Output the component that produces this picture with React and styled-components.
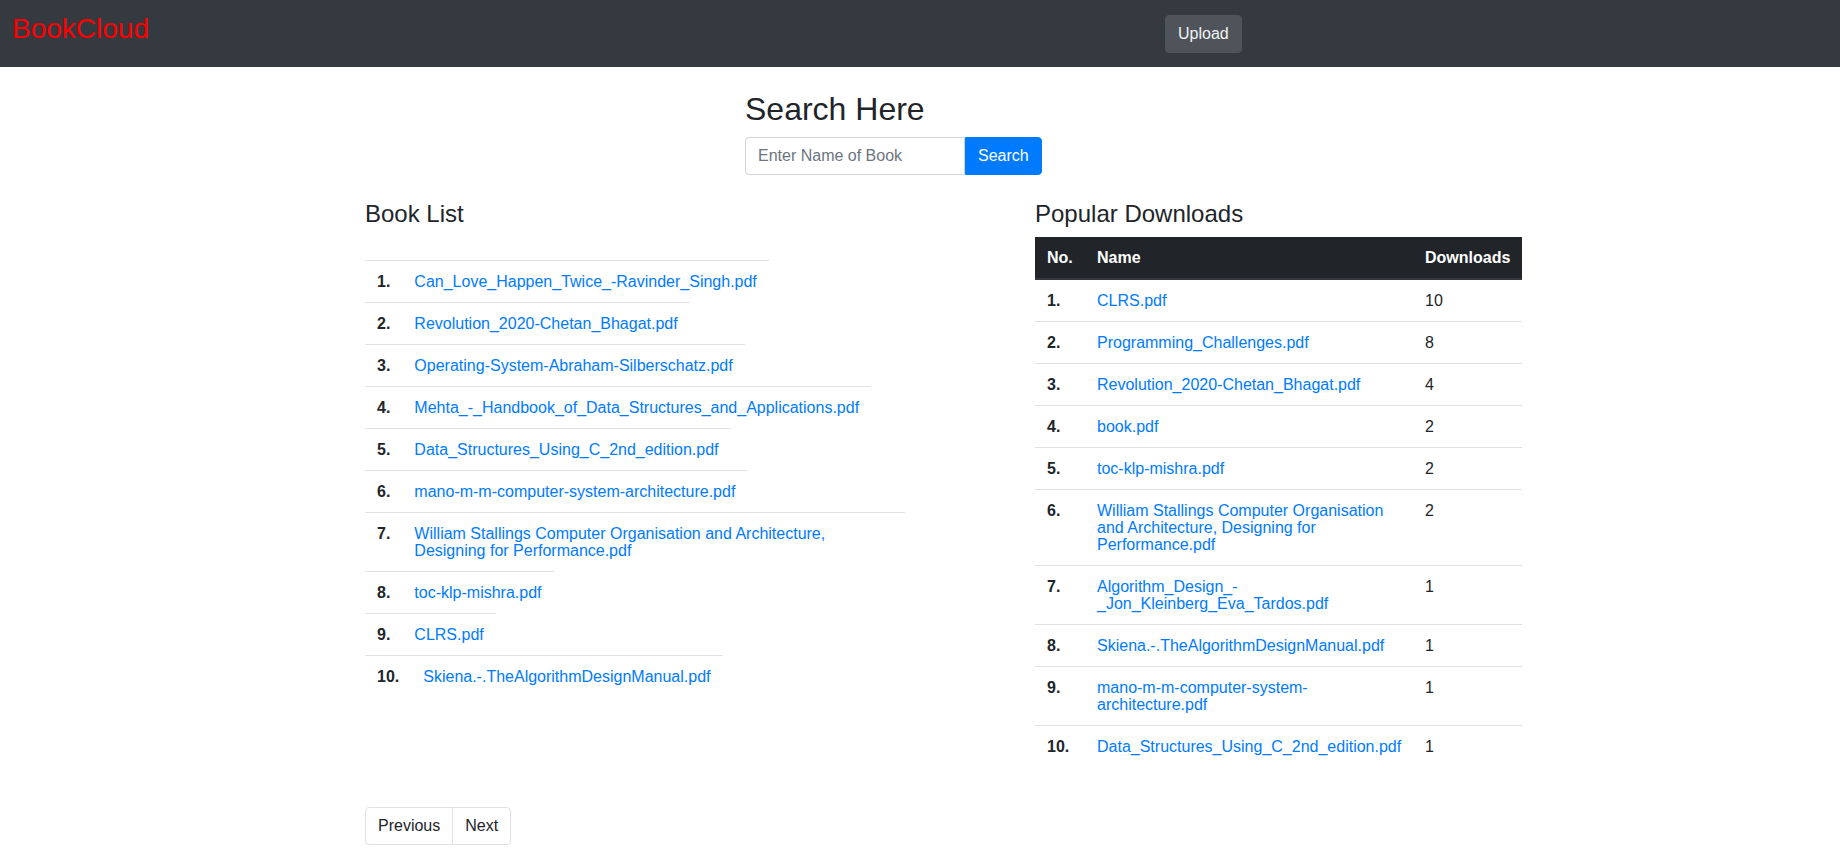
import React from "react";
import styled, { createGlobalStyle } from "styled-components";

const GlobalStyle = createGlobalStyle`
  body {
    margin: 0;
    background: #fff;
    color: #212529;
    font-family: "Liberation Sans", Arial, sans-serif;
    font-size: 16px;
    line-height: 1.5;
  }
  * { box-sizing: border-box; }
`;

// Barra superior
const Navbar = styled.nav`
  display: grid;
  grid-template-columns: 1165px auto;
  align-items: center;
  height: 67px;
  background-color: #343a40;
`;

const Brand = styled.a`
  align-self: start;
  margin-top: 8px;
  padding-left: 12px;
  font-size: 28px;
  line-height: 1.5;
  color: #ff0000;
  text-decoration: none;
`;

const UploadButton = styled.button`
  justify-self: start;
  height: 38px;
  padding: 6px 12px;
  font-family: inherit;
  font-size: 16px;
  line-height: 1.5;
  color: #f1f3f5;
  background-color: #4f545a;
  border: 1px solid #4f545a;
  border-radius: 4px;
  cursor: pointer;
`;

// Bloque de busqueda
const SearchBox = styled.section`
  width: 350px;
  margin: 23px auto 0;
`;

const SearchTitle = styled.h2`
  margin: 0 0 9px;
  font-size: 32px;
  font-weight: 500;
  line-height: 1.2;
`;

const InputGroup = styled.div`
  display: flex;
`;

const SearchInput = styled.input`
  width: 220px;
  height: 38px;
  padding: 6px 12px;
  font-family: inherit;
  font-size: 16px;
  color: #495057;
  border: 1px solid #ced4da;
  border-radius: 4px 0 0 4px;

  &::placeholder {
    color: #6c757d;
  }
`;

const SearchButton = styled.button`
  height: 38px;
  padding: 6px 12px;
  font-family: inherit;
  font-size: 16px;
  color: #fff;
  background-color: #007bff;
  border: 1px solid #007bff;
  border-radius: 0 4px 4px 0;
  cursor: pointer;
`;

// Columnas
const Columns = styled.div`
  display: grid;
  grid-template-columns: 540px 487px;
  column-gap: 130px;
  align-items: start;
  margin: 25px 0 0 calc((100% - 1110px) / 2);
`;

const SectionTitle = styled.h4`
  margin: 0 0 8px;
  font-size: 24px;
  font-weight: 500;
  line-height: 1.2;
`;

const BookList = styled.div`
  margin-top: 31px;
  line-height: 17px;
`;

const BookRow = styled.div`
  display: flex;
  width: fit-content;
  max-width: 540px;
  border-top: 1px solid #dee2e6;
`;

const BookNum = styled.span`
  flex-shrink: 0;
  padding: 12px;
  font-weight: 700;
`;

const BookName = styled.span`
  padding: 12px;
`;

const Link = styled.a`
  color: #007bff;
  text-decoration: none;
`;

const Table = styled.table`
  width: 487px;
  table-layout: fixed;
  border-collapse: collapse;
  line-height: 17px;
`;

const Th = styled.th`
  width: ${(p) => p.$w || "auto"};
  padding: 12px;
  text-align: left;
  vertical-align: bottom;
  color: #fff;
  background-color: #212529;
  border-bottom: 2px solid #32383e;
`;

const Td = styled.td`
  padding: 12px;
  vertical-align: top;
  border-top: 1px solid #dee2e6;
  font-weight: ${(p) => (p.$bold ? 700 : 400)};
`;

// Paginacion
const Pagination = styled.ul`
  display: flex;
  margin: 40px 0 0 calc((100% - 1110px) / 2);
  padding: 0;
  list-style: none;
`;

const PageLink = styled.a`
  display: block;
  padding: 8px 12px;
  margin-left: ${(p) => (p.$first ? "0" : "-1px")};
  line-height: 1.25;
  color: #212529;
  background: #fff;
  border: 1px solid #dee2e6;
  border-radius: ${(p) => (p.$first ? "4px 0 0 4px" : "0 4px 4px 0")};
  text-decoration: none;
`;

const books = [
  "Can_Love_Happen_Twice_-Ravinder_Singh.pdf",
  "Revolution_2020-Chetan_Bhagat.pdf",
  "Operating-System-Abraham-Silberschatz.pdf",
  "Mehta_-_Handbook_of_Data_Structures_and_Applications.pdf",
  "Data_Structures_Using_C_2nd_edition.pdf",
  "mano-m-m-computer-system-architecture.pdf",
  "William Stallings Computer Organisation and Architecture, Designing for Performance.pdf",
  "toc-klp-mishra.pdf",
  "CLRS.pdf",
  "Skiena.-.TheAlgorithmDesignManual.pdf",
];

const popular = [
  ["CLRS.pdf", 10],
  ["Programming_Challenges.pdf", 8],
  ["Revolution_2020-Chetan_Bhagat.pdf", 4],
  ["book.pdf", 2],
  ["toc-klp-mishra.pdf", 2],
  ["William Stallings Computer Organisation and Architecture, Designing for Performance.pdf", 2],
  ["Algorithm_Design_-_Jon_Kleinberg_Eva_Tardos.pdf", 1],
  ["Skiena.-.TheAlgorithmDesignManual.pdf", 1],
  ["mano-m-m-computer-system-architecture.pdf", 1],
  ["Data_Structures_Using_C_2nd_edition.pdf", 1],
];

const App = () => {
  return (
    <>
      <GlobalStyle />
      <Navbar>
        <Brand href="#">BookCloud</Brand>
        <UploadButton>Upload</UploadButton>
      </Navbar>

      <SearchBox>
        <SearchTitle>Search Here</SearchTitle>
        <InputGroup>
          <SearchInput type="text" placeholder="Enter Name of Book" />
          <SearchButton>Search</SearchButton>
        </InputGroup>
      </SearchBox>

      <Columns>
        <div>
          <SectionTitle>Book List</SectionTitle>
          <BookList>
            {books.map((name, i) => (
              <BookRow key={name}>
                <BookNum>{i + 1}.</BookNum>
                <BookName>
                  <Link href="#">{name}</Link>
                </BookName>
              </BookRow>
            ))}
          </BookList>
        </div>

        <div>
          <SectionTitle>Popular Downloads</SectionTitle>
          <Table>
            <thead>
              <tr>
                <Th $w="50px">No.</Th>
                <Th>Name</Th>
                <Th $w="109px">Downloads</Th>
              </tr>
            </thead>
            <tbody>
              {popular.map(([name, count], i) => (
                <tr key={name}>
                  <Td $bold>{i + 1}.</Td>
                  <Td>
                    <Link href="#">{name}</Link>
                  </Td>
                  <Td>{count}</Td>
                </tr>
              ))}
            </tbody>
          </Table>
        </div>
      </Columns>

      <Pagination>
        <li>
          <PageLink href="#" $first>Previous</PageLink>
        </li>
        <li>
          <PageLink href="#">Next</PageLink>
        </li>
      </Pagination>
    </>
  );
};

export default App;
